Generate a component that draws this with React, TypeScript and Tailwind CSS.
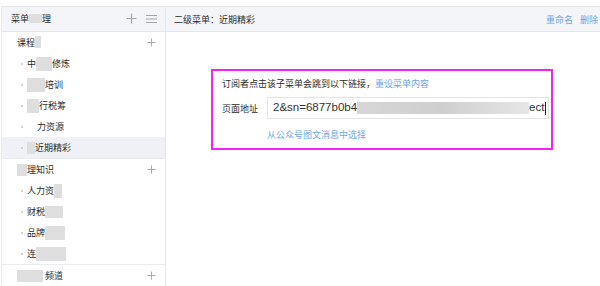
import React from "react";

const font = { fontFamily: '"Noto Sans CJK SC", "Noto Sans", sans-serif' };

function Plus({ size = 9 }: { size?: number }) {
  return (
    <svg width={size} height={size} viewBox="0 0 10 10" className="block">
      <path d="M5 0.5V9.5M0.5 5H9.5" stroke="#a3a3a3" strokeWidth="1" fill="none" />
    </svg>
  );
}

function Menu() {
  return (
    <svg width="11" height="10" viewBox="0 0 11 10" className="block">
      <path d="M0 1.5H11M0 5H11M0 8.5H11" stroke="#a3a3a3" strokeWidth="1" fill="none" />
    </svg>
  );
}

function Hide({ children, w }: { children?: React.ReactNode; w?: string }) {
  return (
    <span className={`inline-block bg-[#dedede] text-transparent ${w ?? ""}`}>{children}</span>
  );
}

function Group({ children, h = "h-[22px]" }: { children: React.ReactNode; h?: string }) {
  return (
    <div className={`${h} flex items-center justify-between pl-[15px] pr-[9px] text-[#2b2b2b]`}>
      <div className="flex items-center">{children}</div>
      <Plus size={9} />
    </div>
  );
}

function Item({ children, selected = false }: { children: React.ReactNode; selected?: boolean }) {
  return (
    <div className={`h-[21.5px] flex items-center pl-[19px] text-[#2b2b2b] ${selected ? "bg-[#f0f1f6]" : ""}`}>
      <span className="w-[2px] h-[2px] rounded-full bg-[#c4c4c4] mr-[4px]" />
      <span className="flex items-center">{children}</span>
    </div>
  );
}

export default function App() {
  return (
    <div className="w-[600px] h-[286px] bg-white overflow-hidden pt-[6px] text-[9px] leading-none relative" style={font}>
      <div className="flex h-full ml-[1px] border-l border-[#ebebef]">
        {/* Sidebar */}
        <div className="w-[164px] border-r border-[#e7e7eb] flex flex-col">
          <div className="h-[26px] bg-[#f4f5f9] border-y border-[#e7e7eb] flex items-center justify-between pl-[9px] pr-[8px] text-[#2b2b2b]">
            <div className="flex items-center">
              菜单<Hide w="w-[13px]">管</Hide>理
            </div>
            <div className="flex items-center gap-[9px]">
              <Plus size={11} />
              <Menu />
            </div>
          </div>
          <Group>
            课程<Hide w="w-[6px] h-[12px]"> </Hide>
          </Group>
          <Item>
            中<Hide w="w-[16px] h-[14px]"> </Hide>修炼
          </Item>
          <Item>
            <Hide w="w-[18px] h-[14px]"> </Hide>培训
          </Item>
          <Item>
            <Hide w="w-[12px] h-[14px]"> </Hide>行税筹
          </Item>
          <Item>
            <span className="w-[10px]" />力资源
          </Item>
          <Item selected>
            <Hide w="w-[8px] h-[12px]"> </Hide>近期精彩
          </Item>
          <div className="border-t border-[#ebebef]" />
          <Group h="h-[21px]">
            <Hide w="w-[10px] h-[12px]"> </Hide>理知识
          </Group>
          <Item>
            人力资<Hide w="w-[8px] h-[14px]"> </Hide>
          </Item>
          <Item>
            财税<Hide w="w-[18px] h-[12px]"> </Hide>
          </Item>
          <Item>
            品牌<Hide w="w-[20px] h-[14px]"> </Hide>
          </Item>
          <Item>
            连<Hide w="w-[30px] h-[14px]"> </Hide>
          </Item>
          <div className="border-t border-[#ebebef]" />
          <Group h="h-[21px]">
            <Hide w="w-[26px] h-[12px]"> </Hide>
            <span className="ml-[2px]">频道</span>
          </Group>
        </div>

        {/* Main */}
        <div className="flex-1 flex flex-col">
          <div className="h-[26px] bg-[#f4f5f9] border-y border-[#e7e7eb] flex items-center justify-between pl-[8px] text-[#2b2b2b]">
            <span>二级菜单：近期精彩</span>
            <div className="flex items-center gap-[7px] text-[#6ea6e6] mr-[2px]">
              <span>重命名</span>
              <span>删除</span>
            </div>
          </div>
          <div className="ml-[45px] mt-[37px] w-[342px] h-[81px] border-2 border-[#f224f2] pl-[9px] pt-[6px] text-[#2b2b2b]">
            <div className="h-[12px] flex items-center">
              订阅者点击该子菜单会跳到以下链接，<span className="text-[#6ea6e6]">重设菜单内容</span>
            </div>
            <div className="mt-[8px] flex items-center">
              <span className="w-[45px]">页面地址</span>
              <div className="w-[282px] h-[22px] border border-[#e4e4e4] flex items-center pl-[5px] text-[11.5px] text-[#333]" style={{ fontFamily: '"Liberation Sans", Arial, sans-serif' }}>
                <span>2&amp;sn=6877b0b4</span>
                <span className="w-[172px] h-[12px] bg-gradient-to-r from-[#d6d6d6] via-[#cfcfcf] to-[#e6e6e6]" />
                <span>ect</span>
                <span className="w-[1px] h-[13px] bg-[#222] ml-[1px]" />
              </div>
            </div>
            <div className="mt-[11px] pl-[45px] text-[#6ea6e6]">从公众号图文消息中选择</div>
          </div>
        </div>
      </div>
    </div>
  );
}
